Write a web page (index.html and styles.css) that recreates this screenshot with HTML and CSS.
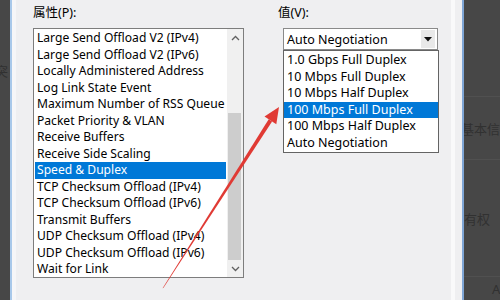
FILE: index.html
```html
<!DOCTYPE html>
<html lang="zh-CN">
<head>
  <meta charset="UTF-8">
  <title>属性 - 高级</title>
  <link rel="stylesheet" href="styles.css">
</head>
<body>

  <div class="screen">

    <!-- 左侧背景窗口 -->
    <div class="side side-left">
      <span class="ghost">突</span>
    </div>

    <!-- 网卡属性对话框 -->
    <div class="dialog">
      <div class="sheet">

        <div class="col col-props">
          <div class="label">属性(P):</div>
          <div class="listbox">
            <ul class="items">
              <li>Large Send Offload V2 (IPv4)</li>
              <li>Large Send Offload V2 (IPv6)</li>
              <li>Locally Administered Address</li>
              <li>Log Link State Event</li>
              <li>Maximum Number of RSS Queue</li>
              <li>Packet Priority &amp; VLAN</li>
              <li>Receive Buffers</li>
              <li>Receive Side Scaling</li>
              <li class="selected">Speed &amp; Duplex</li>
              <li>TCP Checksum Offload (IPv4)</li>
              <li>TCP Checksum Offload (IPv6)</li>
              <li>Transmit Buffers</li>
              <li>UDP Checksum Offload (IPv4)</li>
              <li>UDP Checksum Offload (IPv6)</li>
              <li>Wait for Link</li>
            </ul>
            <div class="scrollbar">
              <div class="sb-btn">
                <svg width="9" height="6" viewBox="0 0 9 6"><path d="M1 5 L4.5 1.5 L8 5" fill="none" stroke="#606060" stroke-width="1.3"/></svg>
              </div>
              <div class="track">
                <div class="track-gap"></div>
                <div class="thumb"></div>
              </div>
              <div class="sb-btn">
                <svg width="9" height="6" viewBox="0 0 9 6"><path d="M1 1 L4.5 4.5 L8 1" fill="none" stroke="#606060" stroke-width="1.3"/></svg>
              </div>
            </div>
          </div>
        </div>

        <div class="col col-value">
          <div class="label">值(V):</div>
          <div class="combo">
            <span class="combo-text">Auto Negotiation</span>
            <span class="combo-btn">
              <svg width="8" height="5" viewBox="0 0 8 5"><path d="M0 0 H8 L4 4.5 Z" fill="#111"/></svg>
            </span>
          </div>
          <ul class="dropdown">
            <li>1.0 Gbps Full Duplex</li>
            <li>10 Mbps Full Duplex</li>
            <li>10 Mbps Half Duplex</li>
            <li class="selected">100 Mbps Full Duplex</li>
            <li>100 Mbps Half Duplex</li>
            <li>Auto Negotiation</li>
          </ul>
        </div>

      </div>
    </div>

    <!-- 右侧背景窗口 -->
    <div class="side side-right">
      <div class="row row-1"></div>
      <div class="row row-2"><span class="ghost">基本信</span></div>
      <div class="row row-3"><span class="ghost">有权</span></div>
      <div class="row row-4"><span class="ghost ghost-a">A</span></div>
    </div>

    <!-- 红色箭头标注 -->
    <svg class="arrow" width="500" height="300" viewBox="0 0 500 300">
      <polygon points="162.6,288.3 163.5,287.8 272.1,121.5 268.7,119.3" fill="#e03a34"/>
      <polygon points="279,107 276.3,124.2 264.5,116.6" fill="#e03a34"/>
    </svg>

  </div>

</body>
</html>
```

FILE: styles.css
```css
body {
  margin: 0;
  font-family: "Noto Sans", "Noto Sans CJK SC", sans-serif;
  font-size: 12.5px;
  color: #000;
}
ul {
  list-style: none;
  margin: 0;
  padding: 0;
}
.screen {
  position: relative;
  width: 500px;
  height: 300px;
  overflow: hidden;
  display: flex;
  background-color: #474747;
}

/* 背景窗口 */
.side {
  overflow: hidden;
  background-color: #474747;
}
.side-left {
  width: 10px;
  padding-top: 61px;
  box-sizing: border-box;
}
.side-left .ghost {
  display: block;
  margin-left: -5px;
}
.ghost {
  color: #313131;
  white-space: nowrap;
  font-size: 13px;
}
.side-right {
  width: 36px;
  display: flex;
  flex-direction: column;
}
.row {
  border-bottom: 1px solid #505050;
  display: flex;
  align-items: center;
}
.row-1 { height: 96px; }
.row-2 { height: 62px; }
.row-2 .ghost { margin-left: -3px; }
.row-3 { height: 116px; }
.row-4 { flex: 1; border-bottom: none; }
.ghost-a { margin-left: 28px; }

/* 对话框 */
.dialog {
  width: 454px;
  box-sizing: border-box;
  border-left: 2px solid #a8c8ea;
  border-right: 2px solid #7fa6d6;
  padding-right: 7px;
  background-color: #efeff1;
}
.sheet {
  height: 100%;
  box-sizing: border-box;
  border-left: 4px solid #f6f6f8;
  border-right: 4px solid #f9f9fa;
  padding: 5px 0 0 17px;
  display: flex;
  gap: 34px;
}
.label {
  line-height: 16px;
  margin-bottom: 7px;
}

/* 属性列表 */
.col-props {
  width: 211px;
}
.listbox {
  height: 250px;
  box-sizing: border-box;
  border: 1px solid #7d7d7d;
  background-color: #fff;
  display: flex;
}
.items {
  flex: 1;
  padding: 1px;
  font-size: 12.1px;
}
.items li,
.dropdown li {
  line-height: 16.5px;
  height: 16.5px;
  padding-left: 2px;
  white-space: nowrap;
}
.items li.selected,
.dropdown li.selected {
  background-color: #0078d7;
  color: #fff;
}
.scrollbar {
  width: 16px;
  display: flex;
  flex-direction: column;
  background-color: #f0f0f0;
}
.sb-btn {
  height: 17px;
  display: flex;
  align-items: center;
  justify-content: center;
}
.track {
  flex: 1;
  display: flex;
  flex-direction: column;
  padding: 0 2px 0 1px;
}
.track-gap {
  height: 67px;
}
.thumb {
  flex: 1;
  background-color: #cdcdcd;
}

/* 值下拉框 */
.col-value {
  width: 162px;
}
.combo,
.dropdown {
  margin-left: 5px;
}
.combo {
  width: 155px;
  height: 22px;
  box-sizing: border-box;
  border: 1px solid #8a8a8a;
  background-color: #fff;
  display: flex;
  align-items: center;
}
.combo-text {
  flex: 1;
  padding-left: 3px;
}
.combo-btn {
  width: 14px;
  height: 18px;
  margin-right: 2px;
  background-color: #e9e9e9;
  display: flex;
  align-items: center;
  justify-content: center;
}
.dropdown {
  width: 156px;
  box-sizing: border-box;
  border: 1px solid #646464;
  background-color: #fff;
  padding: 1px 0 1px;
}
.dropdown li {
  padding-left: 3px;
}

/* 标注箭头 */
.arrow {
  position: absolute;
  left: 0;
  top: 0;
  pointer-events: none;
}
```
